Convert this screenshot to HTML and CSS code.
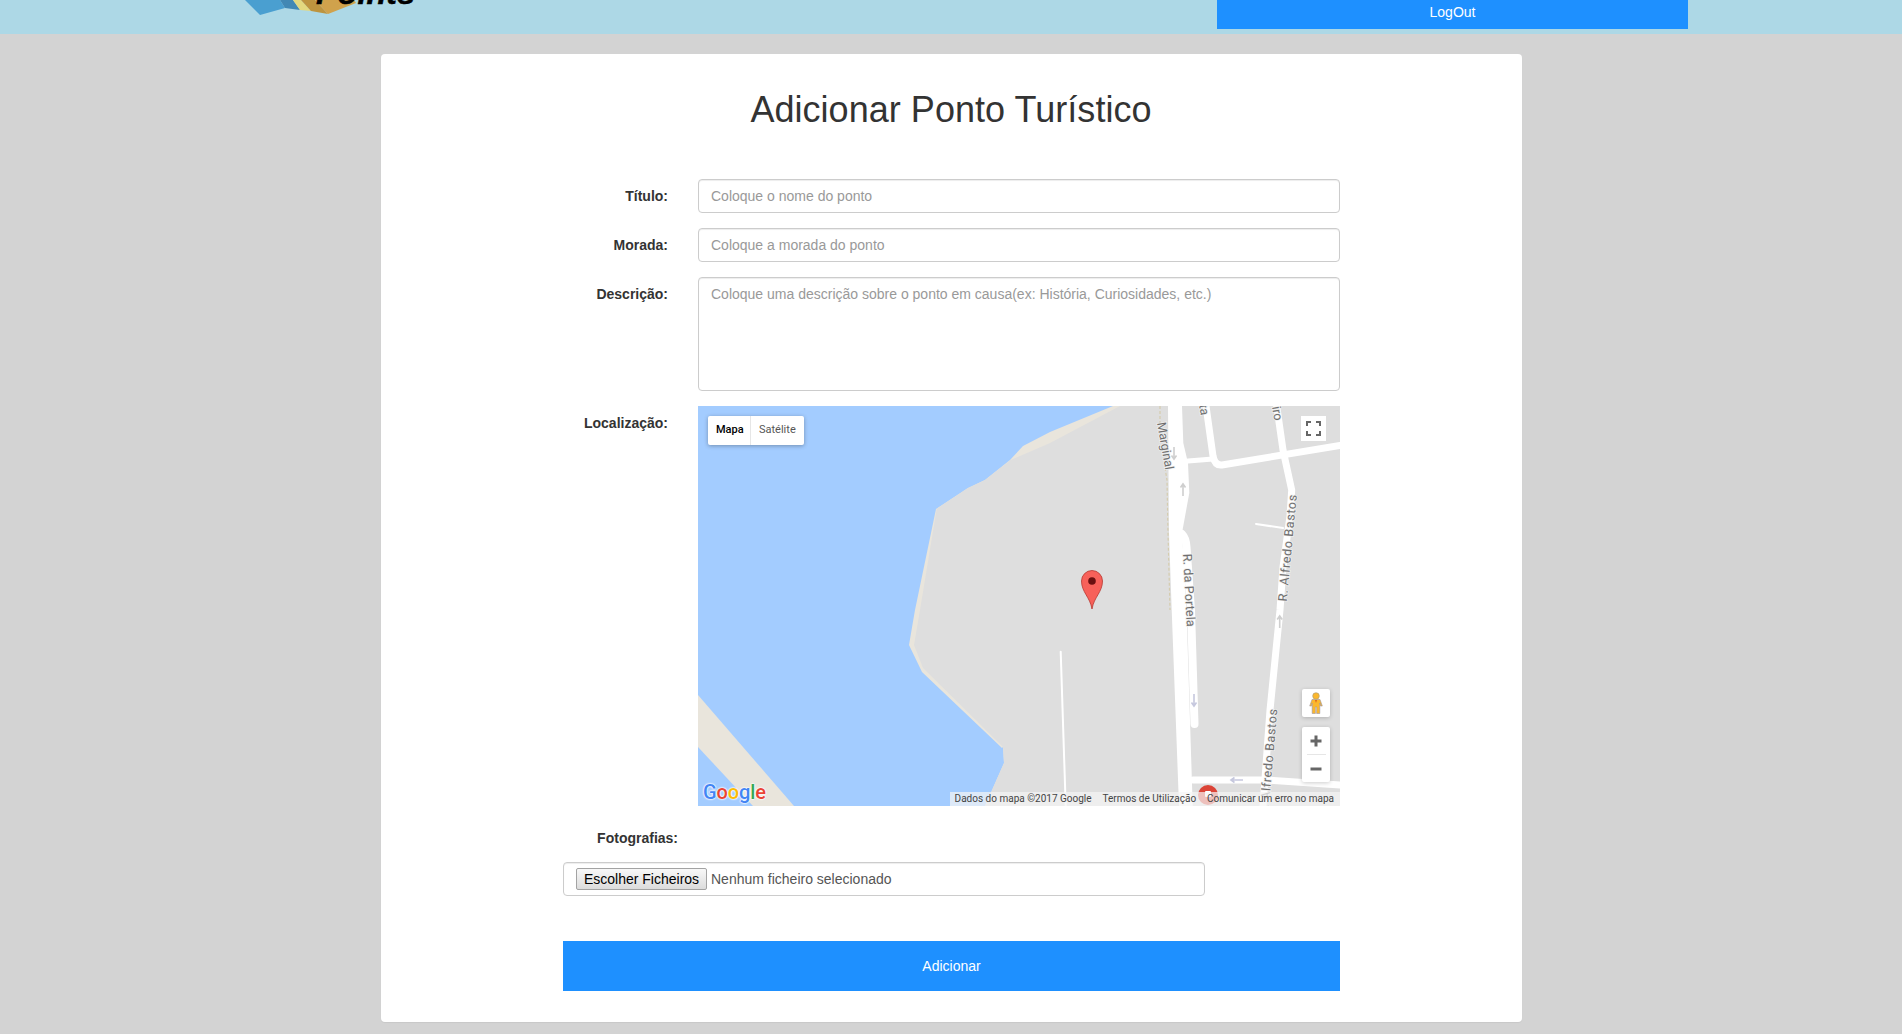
FILE: index.html
```html
<!DOCTYPE html>
<html lang="pt">
<head>
<meta charset="utf-8">
<title>Adicionar Ponto Turístico</title>
<link rel="stylesheet" href="styles.css">
</head>
<body>
<header class="topbar">
  <svg class="logo" viewBox="0 0 180 33" width="180" height="33" aria-label="Points">
    <polygon points="2,0 17,15 42,8 37,0" fill="#4a9fd0"/>
    <polygon points="37,0 42,8 57,10 50,0" fill="#4288b4"/>
    <polygon points="50,0 57,10 68,11 58,0" fill="#e3d87f"/>
    <polygon points="58,0 68,11 85,14 72,0" fill="#bd943f"/>
    <polygon points="72,0 85,14 113,3 111,0" fill="#d0a24c"/>
    <text class="logo-text" x="73" y="4" textLength="99">Points</text>
  </svg>
  <a class="logout" href="#">LogOut</a>
</header>

<main class="card">
  <h1 class="title">Adicionar Ponto Turístico</h1>
  <form class="form">
    <div class="grid">
      <label class="label">Título:</label>
      <input class="field" type="text" placeholder="Coloque o nome do ponto">
      <label class="label">Morada:</label>
      <input class="field" type="text" placeholder="Coloque a morada do ponto">
      <label class="label">Descrição:</label>
      <textarea class="field area" placeholder="Coloque uma descrição sobre o ponto em causa(ex: História, Curiosidades, etc.)"></textarea>
      <label class="label">Localização:</label>
      <div class="map">
        <svg class="map-art" viewBox="0 0 642 400" width="642" height="400">
          <defs>
            <path id="arrow" d="M0 -6V6M-2.5 -2.5L0 -6L2.5 -2.5" fill="none" stroke-width="1.6"/>
          </defs>
          <rect width="642" height="400" fill="#a3ccff"/>
          <polygon points="0,289 96,400 55,400 0,341" fill="#e9e5dc"/>
          <polygon points="415,0 642,0 642,400 287,400 306,357 305,341 304,342 224,266 211,239 217,204 238,103 270,82 287,74 312,54 325,40 352,26" fill="#e9e5dc"/>
          <polygon points="422,0 642,0 642,400 287,400 306,357 305,341 225,262 216,239 222,204 238.7,102.7 270,82 287,74 312.7,54 352,37" fill="#dedede"/>
          <path class="dash" d="M462 0V17M467 62L469 74L470 127L472 204"/>
          <polygon class="road-fill" points="470,0 484,0 485.3,37 490,57 491.3,87 484,127 486,160 488.5,204 494.7,400 481,400 473.7,204 471,127"/>
          <g class="road">
            <path d="M484 128Q488 132 488.5 141L493 204L496.5 318" stroke-width="8"/>
            <path d="M490 55L515 53" stroke-width="5"/>
            <path d="M508 0L515 50Q517 60 524 59L642 39.5" stroke-width="7"/>
            <path d="M578.7 0L585 44L593.7 84L592 110L585 161L582 204L572 304L565 400" stroke-width="7"/>
            <path d="M495 374L569 374L642 379" stroke-width="7"/>
            <path d="M558 118L585 122" stroke-width="2"/>
            <path d="M362.7 245.7L367.7 400" stroke-width="2"/>
          </g>
          <g class="arrows">
            <use href="#arrow" transform="translate(476 47) rotate(180)"/>
            <use href="#arrow" transform="translate(485 84)"/>
            <use href="#arrow" class="arrow-blue" transform="translate(496 294) rotate(180)"/>
            <use href="#arrow" transform="translate(581.7 216)"/>
            <use href="#arrow" class="arrow-blue" transform="translate(539 374) rotate(-90)"/>
          </g>
          <g class="street">
            <text transform="translate(459 17) rotate(80)" textLength="48">Marginal</text>
            <text transform="translate(485 148) rotate(87)" textLength="73">R. da Portela</text>
            <text transform="translate(588.7 195.7) rotate(-84.6)" textLength="107">R. Alfredo Bastos</text>
            <text transform="translate(570 410) rotate(-85)" textLength="107">R. Alfredo Bastos</text>
            <text transform="translate(501 -1) rotate(80)">ta</text>
            <text transform="translate(574 1) rotate(80)">iro</text>
          </g>
          <g class="pin">
            <path class="pin-body" d="M394 203C392 191 383.5 186 383.5 175A10.5 10.5 0 0 1 404.500 175C404.500 186 396 191 394 203Z"/>
            <circle cx="394" cy="175" r="3.800" fill="#6a1010"/>
          </g>
          <circle cx="510" cy="389" r="10" fill="#db4437"/>
          <rect x="507" y="385" width="6" height="6" rx="1" fill="#fff"/>
        </svg>
        <div class="map-type">
          <span class="type active">Mapa</span>
          <span class="type">Satélite</span>
        </div>
        <button class="fullscreen" type="button" aria-label="Ecrã inteiro">
          <svg viewBox="0 0 15 15" width="15" height="15"><path d="M1 5V1H5M10 1H14V5M14 10V14H10M5 14H1V10" fill="none" stroke="#666" stroke-width="2"/></svg>
        </button>
        <div class="pegman">
          <svg viewBox="0 0 14 22" width="14" height="22">
            <circle cx="7" cy="4" r="3.300" fill="#fbb72c" stroke="#a59a80" stroke-width=".6"/>
            <path d="M3 7.500H11L13.300 14H11.500L10.800 11V21.500H7.600V15H6.400V21.500H3.200V11L2.500 14H.7Z" fill="#fbb72c" stroke="#9a93a0" stroke-width=".6"/>
            <path d="M6 8L7 11L8 8Z" fill="#d9641e"/>
          </svg>
        </div>
        <div class="zoomer">
          <span class="zoom-btn"><svg viewBox="0 0 12 12" width="12" height="12"><path d="M6 .5V11.500M.5 6H11.500" stroke="#666" stroke-width="3"/></svg></span>
          <span class="zoom-sep"></span>
          <span class="zoom-btn"><svg viewBox="0 0 12 12" width="12" height="12"><path d="M.5 6H11.500" stroke="#666" stroke-width="3"/></svg></span>
        </div>
        <div class="google"><span class="g-b">G</span><span class="g-r">o</span><span class="g-y">o</span><span class="g-b">g</span><span class="g-g">l</span><span class="g-r">e</span></div>
        <div class="attribution">
          <span>Dados do mapa ©2017 Google</span>
          <span>Termos de Utilização</span>
          <span>Comunicar um erro no mapa</span>
        </div>
      </div>
    </div>
    <label class="photo-label">Fotografias:</label>
    <div class="field file">
      <button class="file-btn" type="button">Escolher Ficheiros</button>
      <span class="file-name">Nenhum ficheiro selecionado</span>
    </div>
    <button class="submit" type="button">Adicionar</button>
  </form>
</main>
</body>
</html>
```
FILE: styles.css
```css
* { box-sizing: border-box; }
html, body { margin: 0; height: 1034px; overflow: hidden; }
body {
  background: #d3d3d3;
  font-family: "Liberation Sans", Arial, sans-serif;
  font-size: 14px;
  line-height: 20px;
  color: #333;
}
.topbar {
  height: 33.500px;
  background: #add8e6;
  display: flex;
  justify-content: space-between;
  align-items: flex-start;
  padding: 0 214px 0 243px;
}
.logo { display: block; }
.logo-text {
  font: italic bold 32px "Liberation Sans", Arial, sans-serif;
  fill: #000;
  stroke: #000;
  stroke-width: .5;
}
.logout {
  display: block;
  width: 471px;
  height: 29px;
  padding-top: 2px;
  background: #1e90ff;
  color: #fff;
  text-align: center;
  text-decoration: none;
}
.card {
  width: 1141px;
  height: 968px;
  margin: 20.500px auto 0;
  background: #fff;
  border-radius: 4px;
  box-shadow: 0 1px 1px rgba(0, 0, 0, .05);
  padding-top: 36px;
}
.title {
  margin: 0 0 49px;
  font-size: 36px;
  font-weight: 500;
  line-height: 40px;
  letter-spacing: .04px;
  text-align: center;
  color: #333;
}
.form { width: 777px; margin-left: 182.500px; }
.grid {
  display: grid;
  grid-template-columns: 135px 642px;
  row-gap: 15px;
  align-items: start;
}
.label {
  font-weight: 700;
  text-align: right;
  padding: 7px 30px 0 0;
}
.field {
  display: block;
  width: 642px;
  height: 34px;
  padding: 6px 12px;
  border: 1px solid #ccc;
  border-radius: 4px;
  background: #fff;
  box-shadow: inset 0 1px 1px rgba(0, 0, 0, .075);
  font: 14px/20px "Liberation Sans", Arial, sans-serif;
  color: #555;
}
.field::placeholder { color: #999; opacity: 1; }
.area { height: 114px; resize: none; }
.map {
  position: relative;
  width: 642px;
  height: 400px;
  overflow: hidden;
  font-family: Roboto, "Liberation Sans", sans-serif;
}
.map-art { display: block; }
.road-fill { fill: #fff; }
.road path { fill: none; stroke: #fff; stroke-linecap: round; stroke-linejoin: round; }
.dash { fill: none; stroke: #d5ccae; stroke-width: 1.200; stroke-dasharray: 3 2; }
.arrows { stroke: #cfcfcf; }
.arrow-blue { stroke: #c6c8de; }
.street text {
  font: 12.500px Roboto, sans-serif;
  fill: #6f6f6f;
  stroke: #f0f0f0;
  stroke-width: 1.500;
  paint-order: stroke;
}
.pin-body { fill: #f7615a; stroke: #b8362e; stroke-width: .8; }
.map-type {
  position: absolute;
  left: 10px;
  top: 10px;
  display: flex;
  width: 96px;
  height: 29px;
  background: #fff;
  border-radius: 2px;
  box-shadow: 0 1px 4px rgba(0, 0, 0, .3);
  font-size: 11px;
  line-height: 28px;
}
.type { padding: 0 0 0 8px; color: #565656; }
.type.active { width: 43px; font-weight: 500; color: #000; border-right: 1px solid #e6e6e6; }
.fullscreen {
  position: absolute;
  right: 14px;
  top: 10px;
  width: 25px;
  height: 25px;
  padding: 0;
  border: 0;
  background: #fff;
  display: flex;
  align-items: center;
  justify-content: center;
}
.pegman {
  position: absolute;
  right: 10px;
  top: 283px;
  width: 28px;
  height: 28px;
  background: #fff;
  border-radius: 2px;
  box-shadow: 0 1px 4px rgba(0, 0, 0, .2);
  display: flex;
  align-items: center;
  justify-content: center;
}
.zoomer {
  position: absolute;
  right: 10px;
  top: 321px;
  width: 28px;
  height: 55px;
  background: #fff;
  border-radius: 2px;
  box-shadow: 0 1px 4px rgba(0, 0, 0, .2);
  display: flex;
  flex-direction: column;
  align-items: center;
}
.zoom-btn { height: 27px; display: flex; align-items: center; justify-content: center; }
.zoom-sep { width: 19px; height: 1px; background: #e6e6e6; flex: none; }
.google {
  position: absolute;
  left: 5px;
  bottom: 1px;
  font: 500 20px/26px Roboto, sans-serif;
  letter-spacing: -.1px;
  text-shadow: 0 0 2px #fff, 0 0 2px #fff, 0 0 2px #fff;
}
.g-b { color: #4285f4; }
.g-r { color: #ea4335; }
.g-y { color: #fbbc05; }
.g-g { color: #34a853; }
.attribution {
  position: absolute;
  right: 0;
  bottom: 0;
  display: flex;
  gap: 11px;
  height: 14px;
  padding: 0 6px 0 5px;
  background: rgba(245, 245, 245, .7);
  font-size: 10px;
  line-height: 14px;
  color: #444;
  white-space: nowrap;
}
.photo-label {
  display: block;
  width: 115px;
  margin: 22px 0 14px;
  font-weight: 700;
  text-align: right;
}
.file {
  display: flex;
  align-items: center;
  gap: 4px;
  padding: 6px 12px;
}
.file-btn {
  width: 131px;
  height: 22px;
  padding: 0;
  border: 1px solid #a3a3a3;
  border-radius: 2px;
  background: linear-gradient(#f8f8f8, #dcdcdc);
  font: 14px "Liberation Sans", Arial, sans-serif;
  color: #000;
}
.submit {
  display: block;
  width: 777px;
  height: 50px;
  margin-top: 45px;
  border: 0;
  background: #1e90ff;
  color: #fff;
  font: 14px "Liberation Sans", Arial, sans-serif;
}
```
